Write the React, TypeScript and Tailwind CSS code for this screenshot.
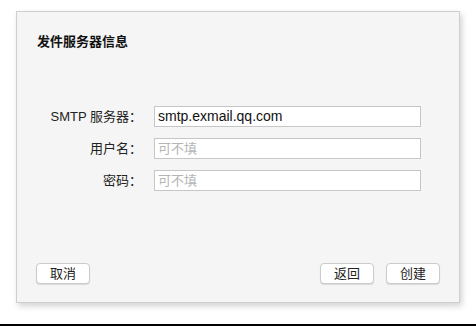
import React from "react";

const font = {
  fontFamily: '"Liberation Sans", "Noto Sans CJK SC", sans-serif',
};

function Field({ label, value, placeholder }: { label: string; value?: string; placeholder?: string }) {
  return (
    <div className="flex items-center h-[21px]">
      <label className="w-[125px] text-right text-[13px] text-[#222]">{label}</label>
      <input
        readOnly
        defaultValue={value}
        placeholder={placeholder}
        className="ml-[12px] w-[267px] h-[21px] bg-white border border-[#c6c6c6] px-[3px] text-[14px] text-[#111] outline-none placeholder:text-[#b4b4b4] placeholder:text-[13px]"
        style={font}
      />
    </div>
  );
}

function Btn({ children }: { children: React.ReactNode }) {
  return (
    <button className="w-[54px] h-[21px] bg-white rounded-[4px] border border-[#cbcbcb] shadow-[0_1px_1px_rgba(0,0,0,0.12)] text-[13px] text-[#222] leading-none">
      {children}
    </button>
  );
}

export default function App() {
  return (
    <div className="w-[476px] h-[326px] bg-white flex flex-col overflow-hidden" style={font}>
      {/* Dialog */}
      <div className="ml-[16px] mt-[11px] w-[444px] h-[292px] bg-[#f5f5f5] border border-[#cfcfcf] shadow-[2px_3px_6px_rgba(0,0,0,0.18)] flex flex-col">
        <h1 className="pt-[21px] px-[20px] text-[13px] leading-[18px] font-bold text-[#111]">发件服务器信息</h1>

        <div className="mt-[55px] flex flex-col gap-[11px]">
          <Field label="SMTP 服务器：" value="smtp.exmail.qq.com" />
          <Field label="用户名：" placeholder="可不填" />
          <Field label="密码：" placeholder="可不填" />
        </div>

        <div className="mt-auto mb-[18px] px-[19px] flex items-center">
          <Btn>取消</Btn>
          <div className="ml-auto flex gap-[12px]">
            <Btn>返回</Btn>
            <Btn>创建</Btn>
          </div>
        </div>
      </div>

      <div className="mt-auto h-[2px] bg-black" />
    </div>
  );
}
